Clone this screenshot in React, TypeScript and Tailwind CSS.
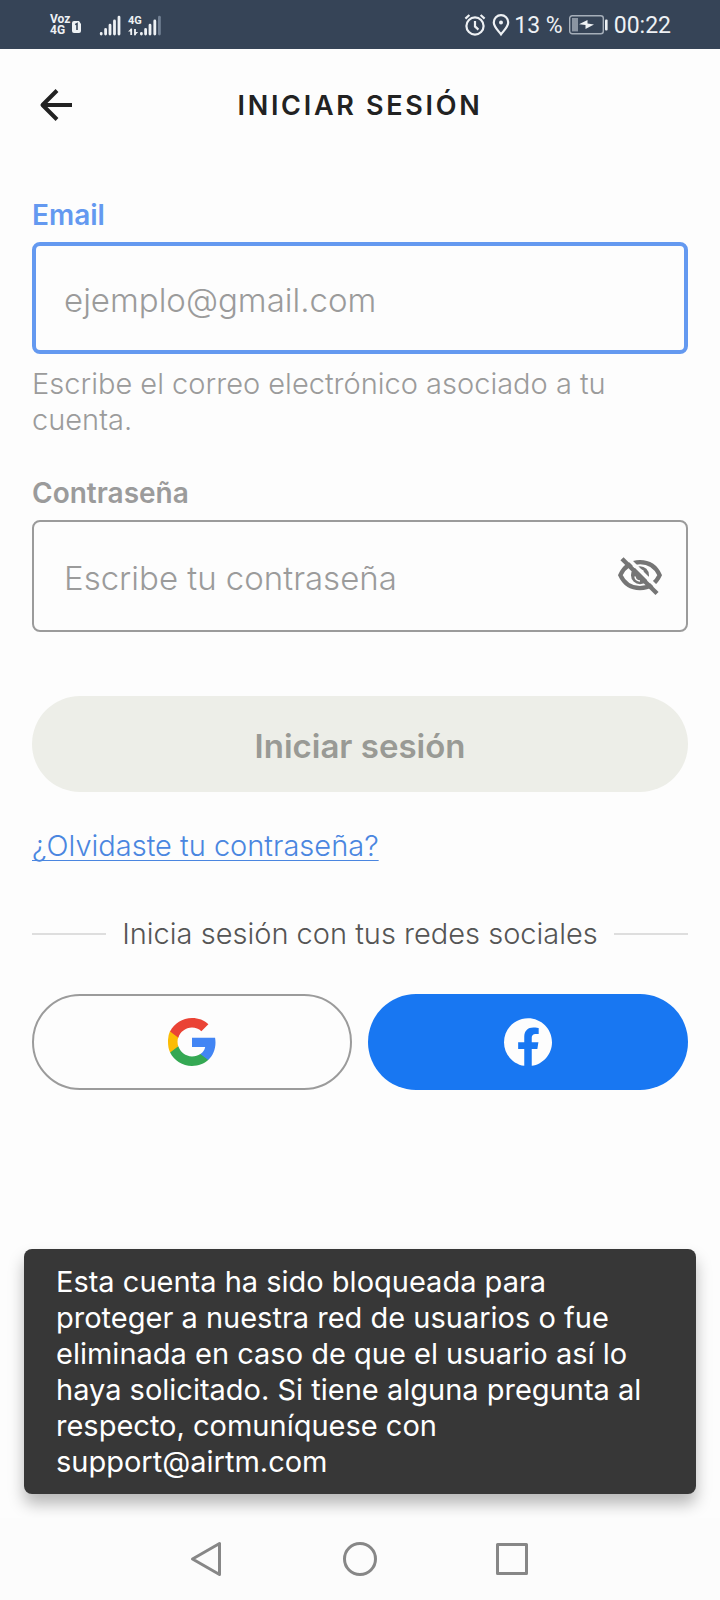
import { useState } from "react";
import type { ReactNode } from "react";

function CarrierIndicators() {
  return (
    <div className="flex items-center pt-px">
      <div className="flex flex-col text-[12px] leading-[11px] font-bold">
        <span>Voz</span>
        <span>4G</span>
      </div>
      <svg className="ml-[2px] mt-1" width="10" height="12" viewBox="0 0 10 12" aria-hidden="true">
        <path d="M2 0h5l2 3v7q0 2-2 2H2Q0 12 0 10V2Q0 0 2 0z" fill="#eef1f4" />
        <path d="M3.2 3.6 5 2.6V9" fill="none" stroke="#364457" strokeWidth="1.6" />
      </svg>
      <svg className="ml-[17px]" width="64" height="24" viewBox="0 0 64 24" aria-hidden="true">
        <g stroke="#eef1f4" strokeWidth="2.8" strokeLinecap="round">
          <path d="M2.2 20.4v.6M6.6 16.4V21M11 12.2V21M15.5 8V21M20 4.2V21" />
          <path d="M42.4 20.4v.6M46.6 16.4V21M51 12.2V21M55.8 8V21" />
          <path d="M60.4 4.2V21" stroke="#728093" />
        </g>
        <path d="M32.2 22v-6.2M36 16v6.2" stroke="#eef1f4" strokeWidth="1.8" />
        <path d="M29 18.6l3.6-3.4v3.4zM35.6 19h3.6l-3.6 3.4z" fill="#eef1f4" />
        <text x="29" y="11.4" fontSize="11" fontWeight="700" fill="#eef1f4">
          4G
        </text>
      </svg>
    </div>
  );
}

function StatusBar() {
  return (
    <div className="flex h-[49px] items-center justify-between bg-[#364457] pl-[50px] pr-[49px] font-['Roboto',sans-serif] text-[#eef1f4]">
      <CarrierIndicators />
      <div className="flex items-center pt-px text-[23px] leading-none">
        <svg width="22" height="24" viewBox="0 0 22 24" fill="none" stroke="currentColor" aria-hidden="true">
          <circle cx="11" cy="13" r="8.6" strokeWidth="2.2" />
          <path d="M11 8v5.4l3.4 3.2" strokeWidth="2.2" />
          <path d="M1.4 5.6 5.4 2M20.6 5.6 16.6 2" strokeWidth="2.2" />
        </svg>
        <svg className="ml-[6px]" width="18" height="24" viewBox="0 0 18 24" fill="none" aria-hidden="true">
          <path
            d="M9 21.4C6 17.4 1.8 13.6 1.8 9.4a7.2 7.2 0 0 1 14.4 0c0 4.200-4.200 8-7.200 12z"
            stroke="currentColor"
            strokeWidth="2.2"
          />
          <circle cx="9" cy="9.400" r="2" fill="currentColor" />
        </svg>
        <span className="ml-1">13 %</span>
        <svg className="ml-[6px]" width="39" height="20" viewBox="0 0 39 20" aria-hidden="true">
          <rect x=".7" y=".7" width="33.600" height="18" rx="2.500" fill="none" stroke="#a6afba" strokeWidth="1.400" />
          <rect x="3" y="3" width="6" height="13.400" fill="#8b95a2" />
          <path d="M10 9.200 18.500 5v3.600l6.500.8-8.500 4.600v-4z" fill="#eef1f4" />
          <rect x="36" y="4.500" width="2.600" height="11" rx="1" fill="#eef1f4" />
        </svg>
        <span className="ml-[6px]">00:22</span>
      </div>
    </div>
  );
}

function EyeOffIcon() {
  return (
    <svg width="48" height="40" viewBox="0 0 48 40" fill="none" aria-hidden="true">
      <path
        d="M4.300 19.200C8.200 10.700 15.500 6.200 24 6.200s15.800 4.500 19.700 13C39.800 27.700 32.500 32.200 24 32.200S8.200 27.700 4.300 19.200z"
        stroke="#757575"
        strokeWidth="4.200"
      />
      <circle cx="24" cy="19.200" r="9" fill="#757575" />
      <path d="M19 20.500a5 5 0 0 0 5 4.500" stroke="#fdfdfd" strokeWidth="1.600" />
      <path d="M27.500 15.500a5 5 0 0 0-4-1.300" stroke="#fdfdfd" strokeWidth="1.600" />
      <path d="M9-.5 46 36.500" stroke="#fdfdfd" strokeWidth="3.600" />
      <path d="M6 2.800 41 37.500" stroke="#757575" strokeWidth="4.400" />
    </svg>
  );
}

function GoogleLogo() {
  return (
    <svg width="48" height="48" viewBox="0 0 48 48" aria-hidden="true">
      <path
        fill="#4285F4"
        d="M47.500 24.550c0-1.700-.15-3.320-.43-4.870H24v9.210h13.180c-.57 2.980-2.290 5.500-4.880 7.190v5.980h7.910c4.630-4.260 7.290-10.530 7.290-17.510z"
      />
      <path
        fill="#34A853"
        d="M24 48c6.610 0 12.150-2.190 16.210-5.930l-7.910-5.980c-2.190 1.470-5 2.340-8.300 2.340-6.380 0-11.780-4.310-13.700-10.100H2.120v6.170C6.150 42.520 14.420 48 24 48z"
      />
      <path
        fill="#FBBC05"
        d="M10.300 28.330c-.49-1.470-.77-3.040-.77-4.650s.28-3.180.77-4.650v-6.170H2.120A24 24 0 0 0 0 23.680c0 3.870.6 7.530 2.120 10.820z"
      />
      <path
        fill="#EA4335"
        d="M24 9.550c3.590 0 6.820 1.240 9.360 3.660l7.020-7.020C36.140 2.240 30.600 0 24 0 14.420 0 6.150 5.480 2.120 13.480l8.180 6.170C12.220 13.860 17.620 9.550 24 9.550z"
      />
    </svg>
  );
}

function FacebookLogo() {
  return (
    <svg width="48" height="48" viewBox="0 0 24 24" fill="#fdfdfd" aria-hidden="true">
      <path d="M24 12.073c0-6.627-5.373-12-12-12s-12 5.373-12 12c0 5.990 4.388 10.954 10.125 11.854v-8.385H7.078v-3.470h3.047V9.430c0-3.007 1.792-4.669 4.533-4.669 1.312 0 2.686.235 2.686.235v2.953H15.830c-1.491 0-1.956.925-1.956 1.874v2.250h3.328l-.532 3.470h-2.796v8.385C19.612 23.027 24 18.062 24 12.073z" />
    </svg>
  );
}

function NavButton({ label, children }: { label: string; children: ReactNode }) {
  return (
    <button type="button" aria-label={label} className="flex size-12 items-center justify-center">
      <svg width="36" height="36" viewBox="0 0 36 36" fill="none" stroke="#878787" strokeWidth="3" strokeLinejoin="round" aria-hidden="true">
        {children}
      </svg>
    </button>
  );
}

export default function App() {
  const [visible, setVisible] = useState(false);

  return (
    <div className="flex min-h-screen flex-col bg-[#fdfdfd] font-['Inter',sans-serif] text-[29px] leading-9">
      <StatusBar />

      <header className="grid grid-cols-[48px_1fr_48px] items-center px-8 pt-8">
        <button type="button" aria-label="Volver" className="flex size-12 items-center justify-center">
          <svg width="34" height="34" viewBox="0 0 34 34" fill="none" stroke="#222222" strokeWidth="4" aria-hidden="true">
            <path d="M33 17H4M18 2.500 3.500 17 18 31.500" strokeLinejoin="round" />
          </svg>
        </button>
        <h1 className="pt-[2px] text-center text-[27px] font-semibold tracking-widest text-[#222222]">INICIAR SESIÓN</h1>
      </header>

      <main className="flex flex-col px-8 pt-[68px]">
        <label htmlFor="email" className="text-[28px] font-semibold text-[#6499f0]">
          Email
        </label>
        <input
          id="email"
          type="email"
          placeholder="ejemplo@gmail.com"
          className="mt-[9px] h-28 w-full rounded-lg border-4 border-[#6499f0] px-7 pt-1 text-[33px] font-light text-[#222222] outline-none placeholder:text-[#9b9b9b]"
        />
        <p className="mt-3 font-light text-[#9b9b9b]">Escribe el correo electrónico asociado a tu cuenta.</p>

        <label htmlFor="password" className="mt-[37px] text-[28px] font-semibold text-[#9b9b9b]">
          Contraseña
        </label>
        <div className="mt-[9px] flex h-28 items-center rounded-lg border-2 border-[#9b9b9b] pl-[30px] pr-[22px]">
          <input
            id="password"
            type={visible ? "text" : "password"}
            placeholder="Escribe tu contraseña"
            className="h-full min-w-0 flex-1 pt-1 text-[33px] font-light text-[#222222] outline-none placeholder:text-[#9b9b9b]"
          />
          <button type="button" aria-label="Mostrar contraseña" aria-pressed={visible} onClick={() => setVisible(!visible)}>
            <EyeOffIcon />
          </button>
        </div>

        <button type="button" disabled className="mt-16 h-24 rounded-full bg-[#edeee8] pt-1 text-[33px] font-semibold text-[#999a95]">
          Iniciar sesión
        </button>

        <a
          href="#recuperar"
          className="mt-9 self-start font-light text-[#4a86e0] underline decoration-1 underline-offset-4 [text-decoration-skip-ink:none]"
        >
          ¿Olvidaste tu contraseña?
        </a>

        <div className="mt-[52px] flex items-center gap-4 font-light text-[#555555]">
          <span className="h-[2px] flex-1 bg-[#dedede]" />
          <span>Inicia sesión con tus redes sociales</span>
          <span className="h-[2px] flex-1 bg-[#dedede]" />
        </div>

        <div className="mt-[42px] grid grid-cols-2 gap-4">
          <button type="button" aria-label="Google" className="flex h-24 items-center justify-center rounded-full border-2 border-[#9b9b9b]">
            <GoogleLogo />
          </button>
          <button type="button" aria-label="Facebook" className="flex h-24 items-center justify-center rounded-full bg-[#1877f2]">
            <FacebookLogo />
          </button>
        </div>
      </main>

      <div
        role="alert"
        className="mx-6 mt-auto mb-6 rounded-lg bg-[#373737] px-8 pt-[15px] pb-[14px] text-white shadow-[0_10px_16px_rgba(0,0,0,0.28)]"
      >
        Esta cuenta ha sido bloqueada para proteger a nuestra red de usuarios o fue eliminada en caso de que el usuario
        así lo haya solicitado. Si tiene alguna pregunta al respecto, comuníquese con support@airtm.com
      </div>

      <nav className="flex h-[82px] items-center justify-center gap-[104px] bg-[#fcfcfc]">
        <NavButton label="Atrás">
          <path d="M29.500 2.500v31L2.500 18z" />
        </NavButton>
        <NavButton label="Inicio">
          <circle cx="18" cy="18" r="15.500" />
        </NavButton>
        <NavButton label="Recientes">
          <rect x="3.500" y="3.500" width="29" height="29" />
        </NavButton>
      </nav>
    </div>
  );
}
